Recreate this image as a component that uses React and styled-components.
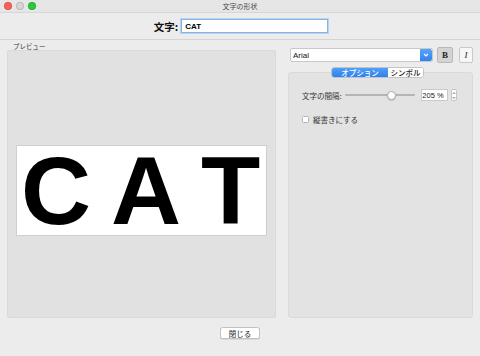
import React, { useState } from "react";
import styled, { createGlobalStyle } from "styled-components";

const GlobalStyle = createGlobalStyle`
  html, body {
    margin: 0;
    padding: 0;
    background: #ececec;
  }
  * {
    box-sizing: border-box;
  }
`;

const jp = `"Noto Sans CJK JP", "Liberation Sans", sans-serif`;

const Window = styled.div`
  width: 480px;
  height: 356px;
  display: flex;
  flex-direction: column;
  background: #ececec;
  font-family: ${jp};
  color: #222;
  overflow: hidden;
`;
const TitleBar = styled.div`
  position: relative;
  height: 13px;
  display: flex;
  align-items: center;
  justify-content: center;
  background: #e6e6e6;
  border-bottom: 1px solid #d6d6d6;
  font-size: 7px;
  color: #4a4a4a;
`;
const Lights = styled.div`
  position: absolute;
  left: 4px;
  top: 2px;
  display: flex;
  gap: 4px;
`;
const Light = styled.span`
  width: 8px;
  height: 8px;
  border-radius: 50%;
  background: ${({ $c }) => $c};
  border: 0.5px solid rgba(0, 0, 0, 0.12);
`;
const Header = styled.div`
  height: 27px;
  display: flex;
  align-items: center;
  justify-content: center;
  gap: 3px;
  border-bottom: 1px solid #d4d4d4;
  padding-left: 2px;
`;
const HeaderLabel = styled.span`
  font-size: 10.5px;
  font-weight: 700;
  color: #111;
`;
const TextField = styled.div`
  width: 147px;
  height: 14px;
  background: #fff;
  border: 1px solid #86b2e6;
  box-shadow: 0 0 0 1px #b9d3f2;
  display: flex;
  align-items: center;
  padding-left: 3px;
  font-family: "Liberation Sans", sans-serif;
  font-size: 8px;
  font-weight: 700;
  color: #000;
`;
const Main = styled.div`
  flex: 1;
  display: flex;
  gap: 12px;
  padding: 2px 7px 0 7px;
`;
const LeftCol = styled.div`
  width: 269px;
  display: flex;
  flex-direction: column;
`;
const SmallLabel = styled.div`
  font-size: 6.5px;
  color: #333;
  height: 8px;
  line-height: 8px;
  padding-left: 6px;
`;
const Panel = styled.div`
  height: 268px;
  background: #e1e1e1;
  border: 1px solid #dadada;
  border-radius: 2px;
  display: flex;
  flex-direction: column;
  justify-content: center;
  padding: 13px 8px 0 8px;
`;
const PreviewBox = styled.div`
  height: 91px;
  background: #fff;
  border: 1px solid #cfcfcf;
  white-space: nowrap;
  padding-left: 4px;
  font-family: "Liberation Sans", Arial, sans-serif;
  font-weight: 700;
  font-size: 97px;
  line-height: 89px;
  letter-spacing: 20px;
  color: #000;
`;
const LastLetter = styled.span`
  letter-spacing: 0;
`;
const RightCol = styled.div`
  width: 185px;
  display: flex;
  flex-direction: column;
  padding-top: 5px;
`;
const FontRow = styled.div`
  display: flex;
  align-items: center;
  gap: 4px;
  padding-left: 2px;
`;
const Select = styled.div`
  width: 143px;
  height: 14px;
  background: #fff;
  border: 1px solid #c8c8c8;
  border-radius: 2px;
  display: flex;
  align-items: center;
  justify-content: space-between;
  padding-left: 2px;
  font-family: "Liberation Sans", sans-serif;
  font-size: 8px;
  color: #111;
  overflow: hidden;
`;
const SelectArrow = styled.span`
  width: 12px;
  height: 100%;
  background: linear-gradient(#5aa4f7, #2f83ef);
  display: flex;
  align-items: center;
  justify-content: center;
  border-radius: 0 2px 2px 0;
`;
const StyleButton = styled.div`
  width: ${({ $w }) => $w}px;
  height: 16px;
  display: flex;
  align-items: center;
  justify-content: center;
  background: ${({ $on }) => ($on ? "#d4d4d4" : "#f7f7f7")};
  border: 1px solid ${({ $on }) => ($on ? "#b8b8b8" : "#c8c8c8")};
  border-radius: 2px;
  font-family: "Liberation Serif", serif;
  font-size: 9px;
  font-weight: ${({ $bold }) => ($bold ? 700 : 400)};
  font-style: ${({ $italic }) => ($italic ? "italic" : "normal")};
  color: #222;
  margin-left: ${({ $ml }) => $ml || 0}px;
`;
const GroupWrap = styled.div`
  position: relative;
  margin-top: 9px;
  height: 246px;
`;
const GroupBox = styled.div`
  height: 100%;
  background: #e3e3e3;
  border: 1px solid #dadada;
  border-radius: 3px;
  padding: 16px 13px 0 13px;
  display: flex;
  flex-direction: column;
  gap: 13px;
`;
const Tabs = styled.div`
  position: absolute;
  top: -5px;
  left: 43px;
  display: flex;
  height: 11px;
  border-radius: 3px;
  overflow: hidden;
  border: 1px solid #c4c4c4;
  background: #fff;
`;
const Tab = styled.div`
  height: 100%;
  width: ${({ $w }) => $w}px;
  display: flex;
  align-items: center;
  justify-content: center;
  font-size: 7.5px;
  font-weight: 500;
  color: ${({ $active }) => ($active ? "#fff" : "#222")};
  background: ${({ $active }) =>
    $active ? "linear-gradient(#4fa0f7, #2c81ee)" : "#fff"};
`;
const Row = styled.div`
  display: flex;
  align-items: center;
  font-size: 7.5px;
  color: #333;
`;
const Slider = styled.div`
  position: relative;
  width: 70px;
  height: 10px;
  margin-left: 3px;
  display: flex;
  align-items: center;
`;
const Track = styled.div`
  width: 100%;
  height: 1.5px;
  background: #b5b5b5;
  border-radius: 1px;
`;
const Thumb = styled.div`
  position: absolute;
  top: 1px;
  width: 9px;
  height: 9px;
  border-radius: 50%;
  background: #fff;
  border: 0.5px solid #b0b0b0;
  box-shadow: 0 0.5px 1px rgba(0, 0, 0, 0.25);
`;
const NumField = styled.div`
  width: 27px;
  height: 12px;
  margin-left: 6px;
  background: #fff;
  border: 1px solid #cacaca;
  display: flex;
  align-items: center;
  justify-content: flex-end;
  padding-right: 3px;
  font-family: "Liberation Sans", sans-serif;
  font-size: 7.5px;
  color: #222;
`;
const Stepper = styled.div`
  width: 6px;
  height: 12px;
  margin-left: 3px;
  background: #fff;
  border: 0.5px solid #c4c4c4;
  border-radius: 2px;
  display: flex;
  align-items: center;
  justify-content: center;
`;
const Check = styled.span`
  width: 7px;
  height: 7px;
  background: #fff;
  border: 0.5px solid #b5b5b5;
  border-radius: 1.5px;
  margin-right: 4px;
`;
const Footer = styled.div`
  height: 38px;
  display: flex;
  justify-content: center;
  padding-top: 9px;
`;
const CloseButton = styled.button`
  width: 40px;
  height: 12px;
  padding: 0;
  background: #fff;
  border: 0.5px solid #c2c2c2;
  border-radius: 2.5px;
  box-shadow: 0 0.5px 0.5px rgba(0, 0, 0, 0.15);
  font-family: ${jp};
  font-size: 7.5px;
  color: #222;
  display: flex;
  align-items: center;
  justify-content: center;
`;

const App = () => {
  const [spacing] = useState(205);
  const thumbLeft = ((spacing - 100) / 250) * 100;
  const text = "CAT";

  return (
    <Window>
      <GlobalStyle />
      <TitleBar>
        <Lights>
          <Light $c="#fc5f57" />
          <Light $c="#d6d6d6" />
          <Light $c="#2ac940" />
        </Lights>
        文字の形状
      </TitleBar>
      <Header>
        <HeaderLabel>文字:</HeaderLabel>
        <TextField>{text}</TextField>
      </Header>
      <Main>
        <LeftCol>
          <SmallLabel>プレビュー</SmallLabel>
          <Panel>
            <PreviewBox>
              {text.slice(0, -1)}
              <LastLetter>{text.slice(-1)}</LastLetter>
            </PreviewBox>
          </Panel>
        </LeftCol>
        <RightCol>
          <FontRow>
            <Select>
              Arial
              <SelectArrow>
                <svg width="6" height="4" viewBox="0 0 6 4">
                  <path d="M1 1 L3 3 L5 1" fill="none" stroke="#fff" strokeWidth="1.2" />
                </svg>
              </SelectArrow>
            </Select>
            <StyleButton $w={16} $on $bold>B</StyleButton>
            <StyleButton $w={14} $italic $ml={2}>I</StyleButton>
          </FontRow>
          <GroupWrap>
            <Tabs>
              <Tab $w={56} $active>オプション</Tab>
              <Tab $w={35}>シンボル</Tab>
            </Tabs>
            <GroupBox>
              <Row>
                文字の間隔:
                <Slider>
                  <Track />
                  <Thumb style={{ left: `${thumbLeft}px` }} />
                </Slider>
                <NumField>{spacing} %</NumField>
                <Stepper>
                  <svg width="4" height="9" viewBox="0 0 4 9">
                    <path d="M0.7 3 L2 1.5 L3.3 3 M0.7 6 L2 7.5 L3.3 6" fill="none" stroke="#555" strokeWidth="0.7" />
                  </svg>
                </Stepper>
              </Row>
              <Row>
                <Check />
                縦書きにする
              </Row>
            </GroupBox>
          </GroupWrap>
        </RightCol>
      </Main>
      <Footer>
        <CloseButton>閉じる</CloseButton>
      </Footer>
    </Window>
  );
};

export default App;
